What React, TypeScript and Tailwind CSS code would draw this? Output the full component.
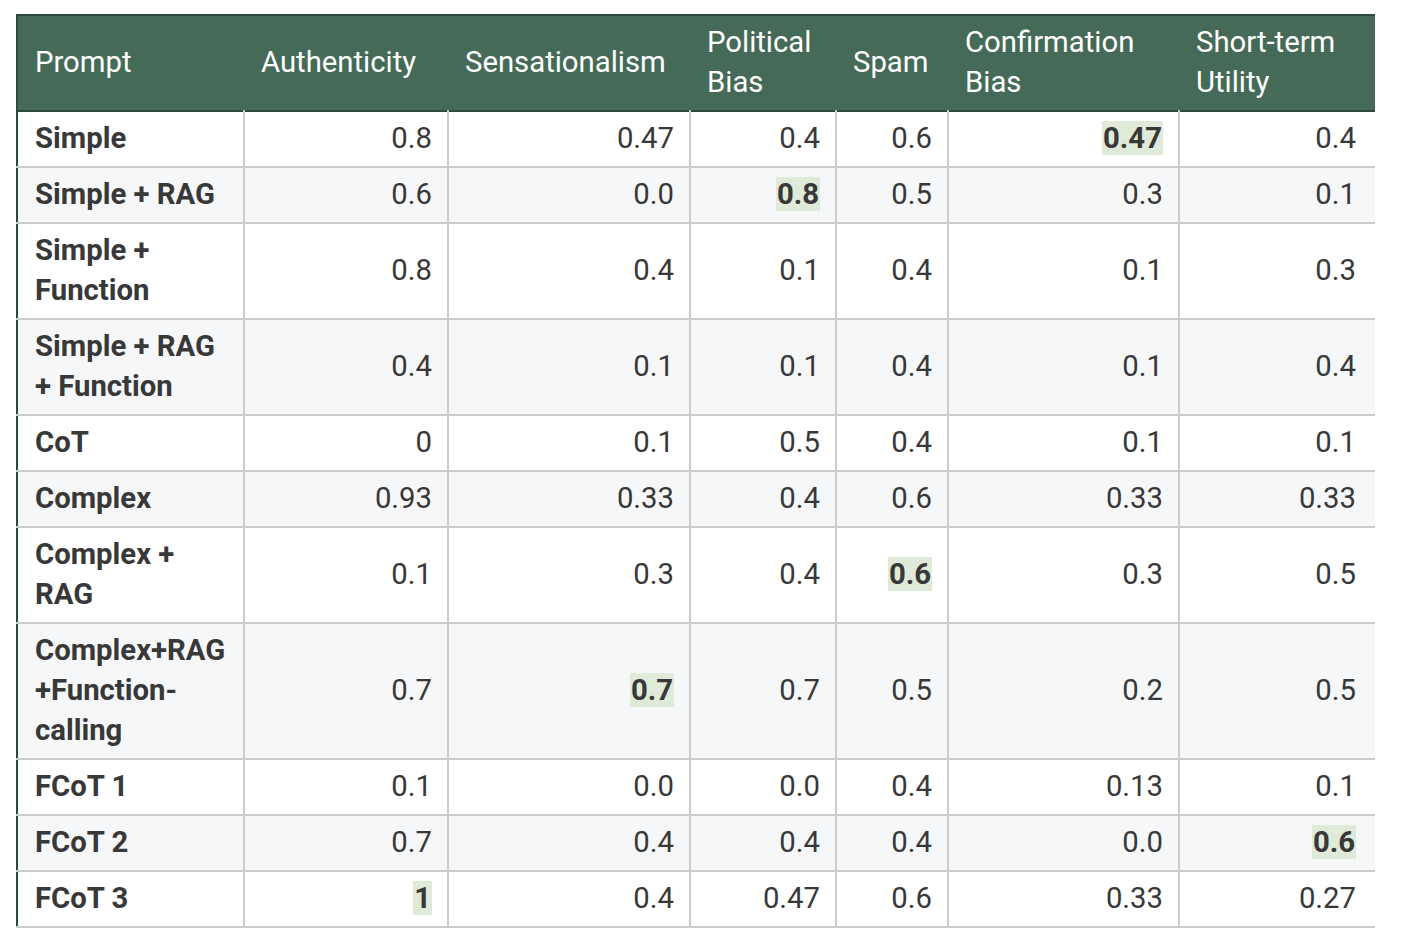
import React from "react";

type Cell = string | { v: string; hi: true };

const headers = [
  "Prompt",
  "Authenticity",
  "Sensationalism",
  "Political Bias",
  "Spam",
  "Confirmation Bias",
  "Short-term Utility",
];

const widths = [227, 204, 242, 146, 112, 231, 196];

const h = (v: string): Cell => ({ v, hi: true });

const rows: { name: string; cells: Cell[] }[] = [
  { name: "Simple", cells: ["0.8", "0.47", "0.4", "0.6", h("0.47"), "0.4"] },
  { name: "Simple + RAG", cells: ["0.6", "0.0", h("0.8"), "0.5", "0.3", "0.1"] },
  { name: "Simple + Function", cells: ["0.8", "0.4", "0.1", "0.4", "0.1", "0.3"] },
  { name: "Simple + RAG + Function", cells: ["0.4", "0.1", "0.1", "0.4", "0.1", "0.4"] },
  { name: "CoT", cells: ["0", "0.1", "0.5", "0.4", "0.1", "0.1"] },
  { name: "Complex", cells: ["0.93", "0.33", "0.4", "0.6", "0.33", "0.33"] },
  { name: "Complex + RAG", cells: ["0.1", "0.3", "0.4", h("0.6"), "0.3", "0.5"] },
  { name: "Complex+RAG +Function-calling", cells: ["0.7", h("0.7"), "0.7", "0.5", "0.2", "0.5"] },
  { name: "FCoT 1", cells: ["0.1", "0.0", "0.0", "0.4", "0.13", "0.1"] },
  { name: "FCoT 2", cells: ["0.7", "0.4", "0.4", "0.4", "0.0", h("0.6")] },
  { name: "FCoT 3", cells: [h("1"), "0.4", "0.47", "0.6", "0.33", "0.27"] },
];

export default function App() {
  return (
    <div
      className="bg-white w-[1402px] h-[950px] pt-[14px] pl-[16px]"
      style={{ fontFamily: "Roboto, 'Liberation Sans', sans-serif" }}
    >
      <table className="border-collapse table-fixed w-[1358px] text-[29.3px] leading-[40px] text-[#383838]">
        <colgroup>
          {widths.map((w, i) => (
            <col key={i} style={{ width: w }} />
          ))}
        </colgroup>
        <thead>
          <tr className="bg-[#456b58] text-white border-t-2 border-l-2 border-b-2 border-[#2d4a3c]">
            {headers.map((t, i) => (
              <th
                key={i}
                className="font-normal text-left align-middle pl-[17px] pr-[12px] pt-[6px] pb-[8px]"
              >
                {t}
              </th>
            ))}
          </tr>
        </thead>
        <tbody className="border-b-2 border-[#2d4a3c]">
          {rows.map((r, ri) => (
            <tr
              key={ri}
              className={ri % 2 === 1 ? "bg-[#f6f7f9]" : "bg-white"}
            >
              <td className="font-bold px-[17px] pt-[6px] pb-[8px] border-l-2 border-l-[#2d4a3c] border-r-2 border-r-[#cccccc] border-b-2 border-b-[#cccccc] align-middle">
                {r.name}
              </td>
              {r.cells.map((c, ci) => (
                <td
                  key={ci}
                  className={
                    "text-right pl-[17px] pt-[6px] pb-[8px] border-b-2 border-b-[#cccccc] align-middle " +
                    (ci < 5 ? "pr-[15px] border-r-2 border-r-[#cccccc]" : "pr-[19px]")
                  }
                >
                  {typeof c === "string" ? (
                    c
                  ) : (
                    <span className="bg-[#dfead8] font-bold px-[1px]">{c.v}</span>
                  )}
                </td>
              ))}
            </tr>
          ))}
        </tbody>
      </table>
    </div>
  );
}
